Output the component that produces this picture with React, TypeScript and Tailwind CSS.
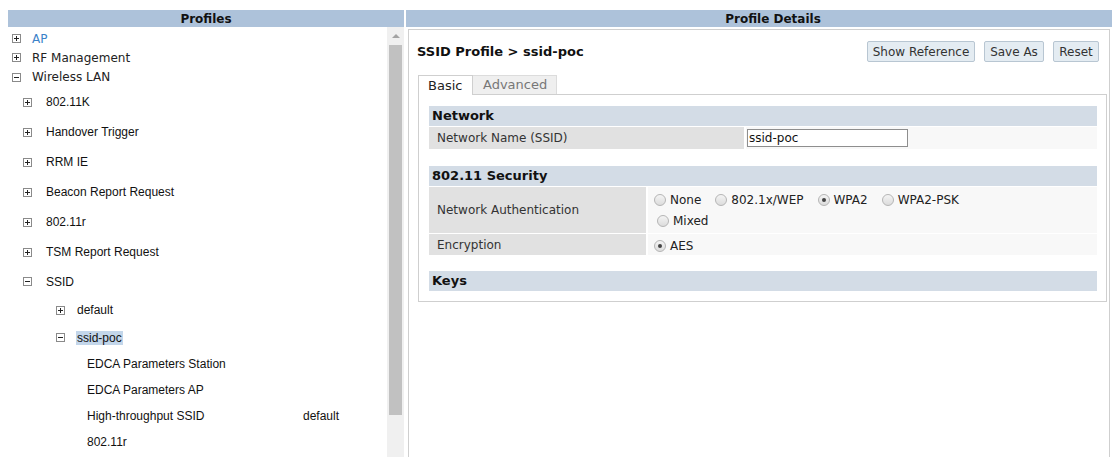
import React from "react";

const Box = ({ minus }: { minus?: boolean }) => (
  <span className="relative inline-block w-[9px] h-[9px] border border-[#8a8a8a] bg-white shrink-0">
    <span className="absolute left-[1px] right-[1px] top-[3px] h-[1px] bg-[#222]" />
    {!minus && <span className="absolute top-[1px] bottom-[1px] left-[3px] w-[1px] bg-[#222]" />}
  </span>
);

const Row = ({
  h,
  iconX,
  textX,
  minus,
  noIcon,
  children,
  top,
}: {
  h: number;
  iconX: number;
  textX: number;
  minus?: boolean;
  noIcon?: boolean;
  children: React.ReactNode;
  top?: boolean;
}) => (
  <div className="flex items-center" style={{ height: h }}>
    <div style={{ width: iconX - 8 }} />
    <div style={{ width: textX - iconX }} className="flex items-center">
      {!noIcon && <Box minus={minus} />}
    </div>
    <div className={top ? "text-[12px] font-['DejaVu_Sans',sans-serif]" : "text-[12px] font-['Liberation_Sans',sans-serif] text-[#111]"}>
      {children}
    </div>
  </div>
);

const Radio = ({ checked, label }: { checked?: boolean; label: string }) => (
  <span className="inline-flex items-center mr-[14px]">
    <span className="relative inline-block w-[12px] h-[12px] rounded-full border border-[#b5b5b5] bg-gradient-to-b from-[#f4f4f4] to-[#dcdcdc] mr-[4px]">
      {checked && <span className="absolute left-[3px] top-[3px] w-[4px] h-[4px] rounded-full bg-[#444]" />}
    </span>
    <span>{label}</span>
  </span>
);

const buttons: { label: string; w: string }[] = [
  { label: "Show Reference", w: "w-[108px]" },
  { label: "Save As", w: "w-[60px]" },
  { label: "Reset", w: "w-[46px]" },
];

export default function App() {
  return (
    <div className="w-[1112px] h-[457px] overflow-hidden bg-white pt-[10px] flex font-['DejaVu_Sans',sans-serif] text-[#222]">
      {/* Left */}
      <div className="ml-[8px] w-[396px] flex flex-col shrink-0">
        <div className="h-[17px] bg-[#adc2da] flex items-center justify-center font-bold text-[12px] text-[#111]">Profiles</div>
        <div className="flex flex-1 min-h-0">
          <div className="flex-1 pt-[2px]">
            <Row h={19} iconX={12} textX={32} top>
              <span className="text-[#3b82c9]">AP</span>
            </Row>
            <Row h={19} iconX={12} textX={32} top>RF Management</Row>
            <Row h={20} iconX={12} textX={32} top minus>Wireless LAN</Row>
            <Row h={30} iconX={23} textX={46}>802.11K</Row>
            <Row h={30} iconX={23} textX={46}>Handover Trigger</Row>
            <Row h={30} iconX={23} textX={46}>RRM IE</Row>
            <Row h={30} iconX={23} textX={46}>Beacon Report Request</Row>
            <Row h={30} iconX={23} textX={46}>802.11r</Row>
            <Row h={30} iconX={23} textX={46}>TSM Report Request</Row>
            <Row h={29} iconX={23} textX={46} minus>SSID</Row>
            <Row h={28} iconX={56} textX={77}>default</Row>
            <Row h={27} iconX={56} textX={76} minus>
              <span className="bg-[#c3d6ea] px-[1px]">ssid-poc</span>
            </Row>
            <Row h={26} iconX={56} textX={87} noIcon>EDCA Parameters Station</Row>
            <Row h={26} iconX={56} textX={87} noIcon>EDCA Parameters AP</Row>
            <Row h={26} iconX={56} textX={87} noIcon>
              <span className="inline-block w-[216px]">High-throughput SSID</span>default
            </Row>
            <Row h={26} iconX={56} textX={87} noIcon>802.11r</Row>
          </div>
          <div className="w-[17px] bg-[#f0f0f0] flex flex-col items-center">
            <div className="h-[18px] flex items-center justify-center">
              <span className="w-0 h-0 border-l-[4px] border-r-[4px] border-b-[4px] border-l-transparent border-r-transparent border-b-[#a3a3a3]" />
            </div>
            <div className="w-[13px] h-[370px] bg-[#c1c1c1]" />
          </div>
        </div>
      </div>

      {/* Right */}
      <div className="ml-[2px] flex-1 flex flex-col">
        <div className="h-[17px] bg-[#adc2da] flex items-center justify-center pl-[28px] font-bold text-[12px] text-[#111]">Profile Details</div>
        <div className="mt-[2px] ml-[2px] mr-[2px] flex-1 border-l border-t border-r border-[#cfcfcf] pl-[8px] pr-[10px]">
          <div className="flex items-center justify-between pt-[11px] h-[33px]">
            <div className="font-bold text-[13px] text-[#111]">SSID Profile &gt; ssid-poc</div>
            <div className="flex gap-[9px] -mt-[1px]">
              {buttons.map((b) => (
                <button key={b.label} className={`${b.w} h-[21px] flex items-center justify-center border border-[#b8c6d2] rounded-[2px] bg-[#e4ecf2] text-[12px] text-[#333] leading-none`}>
                  {b.label}
                </button>
              ))}
            </div>
          </div>
          <div className="mt-[12px] ml-[1px] mr-[-8px]">
            <div className="flex h-[20px] relative z-10">
              <div className="w-[55px] h-[20px] bg-white border-l border-t border-r border-[#cfcfcf] text-[13px] text-[#222] pl-[9px] flex items-center">Basic</div>
              <div className="w-[84px] h-[19px] bg-[#efefef] border-t border-r border-[#dcdcdc] text-[13px] text-[#777] pl-[10px] flex items-center">Advanced</div>
            </div>
            <div className="border border-[#cfcfcf] -mt-[1px] pl-[10px] pr-[9px] pt-[11px] pb-[10px]">
              <div className="h-[20px] bg-[#d3dce6] flex items-center pl-[3px] font-bold text-[13px] text-[#111]">Network</div>
              <div className="flex h-[22px] mt-[1px] text-[12px] text-[#333]">
                <div className="w-[315px] bg-[#e1e1e1] flex items-center pl-[8px]">Network Name (SSID)</div>
                <div className="flex-1 ml-[2px] bg-[#f8f8f8] flex items-center pl-[1px]">
                  <div className="w-[161px] h-[18px] border border-[#8e8e8e] bg-white flex items-center pl-[1px] text-[#111]">ssid-poc</div>
                </div>
              </div>
              <div className="h-[20px] mt-[17px] bg-[#d3dce6] flex items-center pl-[3px] font-bold text-[13px] text-[#111]">802.11 Security</div>
              <div className="flex h-[46px] mt-[1px] text-[12px] text-[#333]">
                <div className="w-[217px] bg-[#e1e1e1] flex items-center pl-[8px]">Network Authentication</div>
                <div className="flex-1 ml-[2px] bg-[#f8f8f8] pl-[6px] pt-[6px] text-[12px] text-[#222]">
                  <div className="flex items-center h-[14px]">
                    <Radio label="None" />
                    <Radio label="802.1x/WEP" />
                    <Radio checked label="WPA2" />
                    <Radio label="WPA2-PSK" />
                  </div>
                  <div className="flex items-center h-[14px] mt-[7px] pl-[3px]">
                    <Radio label="Mixed" />
                  </div>
                </div>
              </div>
              <div className="flex h-[21px] mt-[1px] text-[12px] text-[#333]">
                <div className="w-[217px] bg-[#e1e1e1] flex items-center pl-[8px]">Encryption</div>
                <div className="flex-1 ml-[2px] bg-[#f8f8f8] pl-[6px] flex items-center pt-[2px] text-[#222]">
                  <Radio checked label="AES" />
                </div>
              </div>
              <div className="h-[20px] mt-[16px] bg-[#d3dce6] flex items-center pl-[3px] font-bold text-[13px] text-[#111]">Keys</div>
            </div>
          </div>
        </div>
      </div>
    </div>
  );
}
